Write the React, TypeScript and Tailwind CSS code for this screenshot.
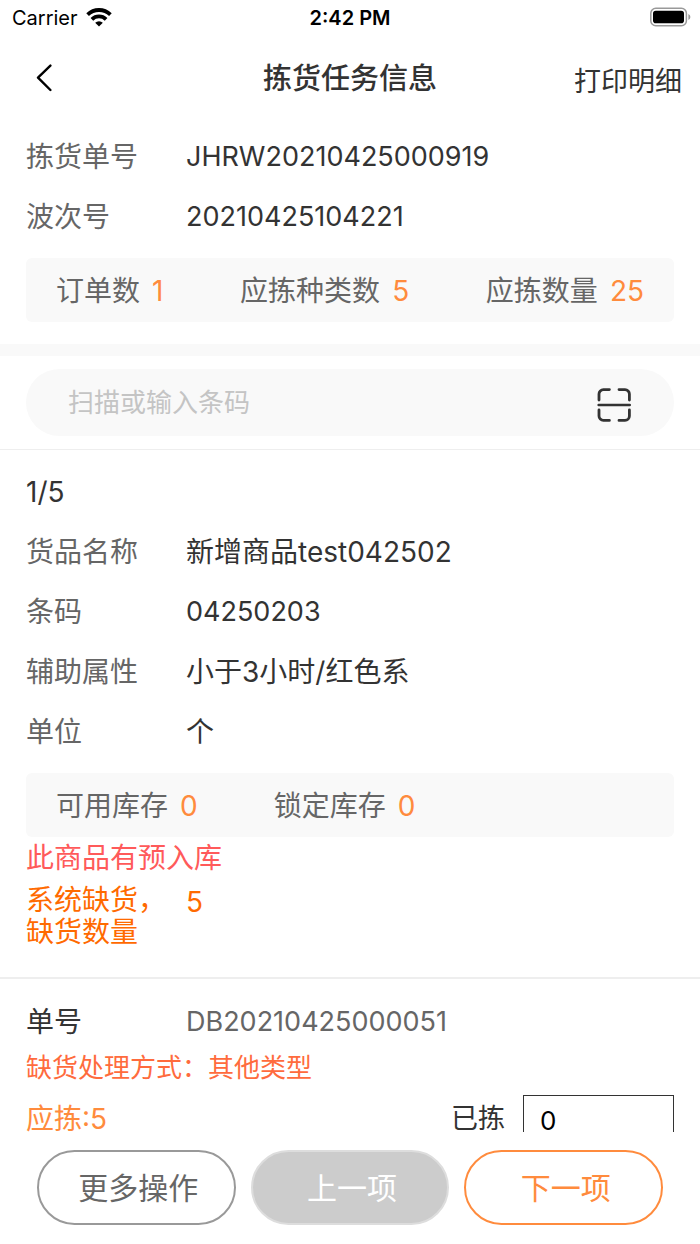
import React from 'react';

type RowProps = {
  label: string;
  value: string;
  labelClass?: string;
  valueClass?: string;
};

const Row: React.FC<RowProps> = ({
  label,
  value,
  labelClass = 'text-[#666]',
  valueClass = 'text-[28px] text-[#333]',
}) => (
  <div className="flex h-15 items-center">
    <dt className={`w-40 shrink-0 ${labelClass}`}>{label}</dt>
    <dd className={valueClass}>{value}</dd>
  </div>
);

const Stat: React.FC<{ label: string; value: number }> = ({ label, value }) => (
  <p className="text-[#666]">
    {label}
    <span className="ml-3 text-[#ff8b3d]">{value}</span>
  </p>
);

const StatusBar: React.FC = () => (
  <div className="grid h-9 grid-cols-3 items-center px-3 text-xl text-black">
    <div className="flex items-center gap-2">
      Carrier
      <svg width="26" height="20" viewBox="0 0 26 20" fill="none" stroke="#000" strokeWidth="3.8">
        <path d="M1.6 6.6a16.4 16.4 0 0 1 22.8 0" />
        <path d="M5.9 11.3a10.2 10.2 0 0 1 14.2 0" />
        <path d="M9.2 14.8a5.4 5.4 0 0 1 7.6 0L13 18.6z" fill="#000" stroke="none" />
      </svg>
    </div>
    <div className="text-center font-semibold">2:42 PM</div>
    <svg className="justify-self-end overflow-visible" width="40" height="20" viewBox="0 0 40 20">
      <rect x="2.8" y="0.2" width="35.6" height="17.6" rx="5" fill="none" stroke="#999" strokeWidth="1.5" />
      <rect x="5" y="2.8" width="31" height="12.4" rx="2.8" fill="#000" />
      <path d="M40.4 6v6q2-1 2-3t-2-3z" fill="#999" />
    </svg>
  </div>
);

const Header: React.FC = () => (
  <header className="grid h-21 grid-cols-3 items-center px-[18px] text-[#333]">
    <button type="button" aria-label="返回" className="w-9 pl-[17px]">
      <svg width="18" height="28" viewBox="0 0 18 28" fill="none" stroke="#000" strokeWidth="2.4" strokeLinecap="round" strokeLinejoin="round">
        <path d="M15.4 1.6 3 13.6 15.4 26" />
      </svg>
    </button>
    <h1 className="pt-px text-center text-[29px] font-medium">拣货任务信息</h1>
    <button type="button" className="justify-self-end pt-2 text-[27px]">
      打印明细
    </button>
  </header>
);

const SearchBar: React.FC = () => (
  <div className="border-b border-[#eee] px-[26px] py-[13px]">
    <div className="flex h-[67px] items-center rounded-full bg-[#f9f9f9] px-[42px]">
      <input
        type="text"
        aria-label="条码"
        placeholder="扫描或输入条码"
        className="min-w-0 flex-1 bg-transparent text-[26px] outline-none placeholder:text-[#c4c4c4]"
      />
      <button type="button" aria-label="扫描" className="pt-1">
        <svg width="36" height="36" viewBox="0 0 36 36" fill="none" stroke="#333" strokeWidth="2.8" strokeLinecap="round">
          <path d="M3 13V7a4.4 4.4 0 0 1 4.4-4.4h6" />
          <path d="M23 2.6h6A4.4 4.4 0 0 1 33.4 7v6" />
          <path d="M33.4 23v6a4.4 4.4 0 0 1-4.4 4.4h-6" />
          <path d="M13.4 33.4h-6A4.4 4.4 0 0 1 3 29v-6" />
          <path d="M2.6 18h31.2" strokeWidth="2.4" />
        </svg>
      </button>
    </div>
  </div>
);

const App: React.FC = () => {
  return (
    <div className="flex h-screen flex-col overflow-hidden bg-white font-['Inter','Noto_Sans_CJK_SC',sans-serif] text-[28px] leading-8">
      <StatusBar />
      <Header />
      <main className="min-h-0 flex-1 overflow-hidden">
        <section className="border-b-12 border-[#f9f9f9] px-[26px] pt-[7px] pb-[22px]">
          <dl>
            <Row label="拣货单号" value="JHRW20210425000919" valueClass="text-[27px] text-[#333]" />
            <Row label="波次号" value="20210425104221" valueClass="text-[27px] text-[#333]" />
          </dl>
          <div className="mt-[11px] flex h-16 items-center justify-between rounded-md bg-[#f9f9f9] px-[30px] pt-px">
            <Stat label="订单数" value={1} />
            <Stat label="应拣种类数" value={5} />
            <Stat label="应拣数量" value={25} />
          </div>
        </section>

        <SearchBar />

        <section className="border-b-2 border-[#eee] px-[26px] pt-3 pb-[29px]">
          <p className="flex h-15 items-center text-[#333]">1/5</p>
          <dl>
            <Row label="货品名称" value="新增商品test042502" />
            <Row label="条码" value="04250203" valueClass="text-[27px] text-[#333]" />
            <Row label="辅助属性" value="小于3小时/红色系" />
            <Row label="单位" value="个" />
          </dl>
          <div className="mt-[11px] flex h-16 items-center gap-19 rounded-md bg-[#f9f9f9] px-[30px] pt-px">
            <Stat label="可用库存" value={0} />
            <Stat label="锁定库存" value={0} />
          </div>
          <p className="pt-[5px] text-[#ff5a5a]">此商品有预入库</p>
          <div className="flex pt-[10px] text-[#ff6a00]">
            <p className="w-40 shrink-0">
              系统缺货，
              <br />
              缺货数量
            </p>
            <p className="pt-[2px]">5</p>
          </div>
        </section>

        <section className="px-[26px] pt-[13px]">
          <dl>
            <Row
              label="单号"
              value="DB20210425000051"
              labelClass="text-[#333]"
              valueClass="text-[27px] text-[#666]"
            />
          </dl>
          <p className="text-[26px] text-[#ff6b3d]">缺货处理方式：其他类型</p>
          <div className="mt-[11px] flex items-start justify-between leading-6">
            <p className="pt-3 text-[#ff8b3d]">应拣:5</p>
            <label className="flex items-start gap-[18px] text-[27px] text-[#333]">
              <span className="pt-3">已拣</span>
              <input
                type="text"
                defaultValue="0"
                className="h-[50px] w-[151px] border border-[#333] px-4 text-[26px] text-black"
              />
            </label>
          </div>
        </section>
      </main>

      <footer className="grid shrink-0 grid-cols-3 gap-[15px] px-[37px] pt-[18px] pb-[19px] text-[30px]">
        <button type="button" className="h-[75px] rounded-full border-2 border-[#999] pl-1 text-[#666]">
          更多操作
        </button>
        <button type="button" className="h-[75px] rounded-full border-2 border-[#ddd] bg-[#ccc] pl-1 text-white">
          上一项
        </button>
        <button type="button" className="h-[75px] rounded-full border-2 border-[#ff8b3d] pl-1 text-[#ff8b3d]">
          下一项
        </button>
      </footer>
    </div>
  );
};

export default App;
